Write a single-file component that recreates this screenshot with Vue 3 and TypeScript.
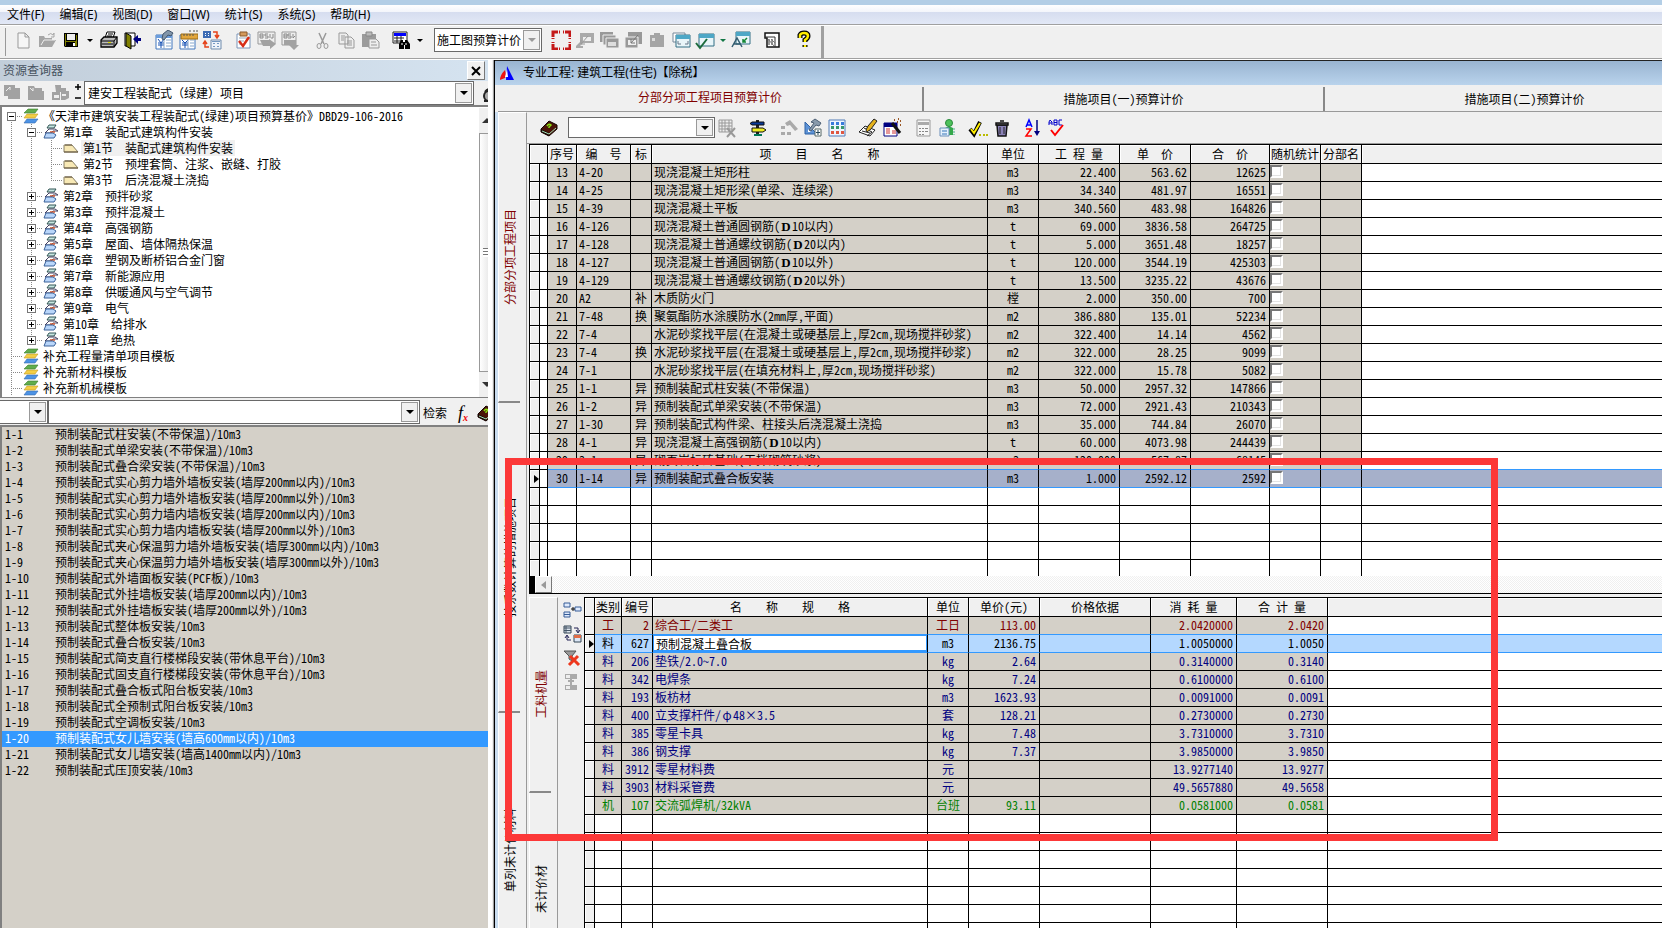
<script setup lang="ts">
import { ref } from 'vue'

interface Tool { icon: string; label: string; kind?: 'sep' | 'caret' }
interface TreeRow { guides: string[]; box?: '+' | '-'; icon: string; text: string; selected?: boolean }

const sep: Tool = { icon: '', label: '', kind: 'sep' }
const caret = (label: string): Tool => ({ icon: '', label, kind: 'caret' })
const tool = (icon: string, label: string): Tool => ({ icon, label })

const menus = ['文件(F)', '编辑(E)', '视图(D)', '窗口(W)', '统计(S)', '系统(S)', '帮助(H)']

const fileTools: Tool[] = [
  tool('new', '新建'), tool('open', '打开'), tool('save', '保存'), caret('保存选项'), tool('print', '打印'), tool('exit', '退出'), sep,
  tool('fee', '费用设置'), tool('rule', '单价标尺'), tool('swap', '转换'), sep,
  tool('check', '检查'), tool('bsi', '导出'), tool('bsw', '导入'), sep,
  tool('cut', '剪切'), tool('copy', '复制'), tool('paste', '粘贴'), sep,
  tool('find', '查找'), caret('查找选项'), sep,
]
const windowTools: Tool[] = [
  sep, tool('frame', '全屏'), tool('w1', '还原'), tool('w2', '层叠'), tool('w3', '平铺'), tool('w4', '粘贴窗口'), tool('w5', '新窗口'),
  tool('w6', '选中窗口'), caret('窗口选项'), tool('w7', '字体窗口'), sep, tool('page', '页面'), sep, tool('help', '帮助'),
]
const gridTools: Tool[] = [
  tool('griddel', '删除表格'), sep, tool('sign', '定位'), sep, tool('hammer', '修改'), tool('tools', '工具'), tool('calcgrid', '表格'), sep,
  tool('pen', '编辑'), tool('wizard', '向导'), sep, tool('calc', '计算'), tool('person', '人员'), sep,
  tool('tick', '确认'), tool('trash', '删除'), sep, tool('sort', '排序'), tool('abc', '校验'),
]
const detailTools = [tool('d1', '插入'), tool('d2', '替换'), tool('d3', '取消筛选'), tool('d4', '关联')]

const chapters = ['预拌砂浆', '预拌混凝土', '高强钢筋', '屋面、墙体隔热保温', '塑钢及断桥铝合金门窗', '新能源应用', '供暖通风与空气调节', '电气', '给排水', '绝热']
const sections = ['装配式建筑构件安装', '预埋套筒、注浆、嵌缝、打胶', '后浇混凝土浇捣']
const tree: TreeRow[] = [
  { guides: ['first'], box: '-', icon: 'layers', text: '《天津市建筑安装工程装配式(绿建)项目预算基价》DBD29-106-2016' },
  { guides: ['v', 't'], box: '-', icon: 'books', text: '第1章　装配式建筑构件安装' },
  ...sections.map((s, i) => ({ guides: ['v', 'v', i === 2 ? 'l' : 't'], icon: 'leaf', text: `第${i + 1}节　${s}`, selected: i === 0 })),
  ...chapters.map((c, i) => ({ guides: ['v', i === 9 ? 'l' : 't'], box: '+' as const, icon: 'books', text: `第${i + 2}章　${c}` })),
  ...['补充工程量清单项目模板', '补充新材料模板', '补充新机械模板'].map((s) => ({ guides: ['t'], icon: 'layers', text: s })),
]

const resources = [
  '柱安装(不带保温)', '单梁安装(不带保温)', '叠合梁安装(不带保温)', '实心剪力墙外墙板安装(墙厚200mm以内)',
  '实心剪力墙外墙板安装(墙厚200mm以外)', '实心剪力墙内墙板安装(墙厚200mm以内)', '实心剪力墙内墙板安装(墙厚200mm以外)',
  '夹心保温剪力墙外墙板安装(墙厚300mm以内)', '夹心保温剪力墙外墙板安装(墙厚300mm以外)', '外墙面板安装(PCF板)',
  '外挂墙板安装(墙厚200mm以内)', '外挂墙板安装(墙厚200mm以外)', '整体板安装', '叠合板安装', '简支直行楼梯段安装(带休息平台)',
  '固支直行楼梯段安装(带休息平台)', '叠合板式阳台板安装', '全预制式阳台板安装', '空调板安装', '女儿墙安装(墙高600mm以内)',
  '女儿墙安装(墙高1400mm以内)', '压顶安装',
].map((s, i) => ({ code: `1-${i + 1}`, name: `预制装配式${s}/10m3` }))
const selectedResource = ref('1-20')

const tabs = ['分部分项工程项目预算计价', '措施项目(一)预算计价', '措施项目(二)预算计价']

const itemHead = ['序号', '编　号', '标', '项　　目　　名　　称', '单位', '工 程 量', '单　价', '合　价', '随机统计', '分部名']
const items = [
  ['13', '4-20', '', '现浇混凝土矩形柱', 'm3', '22.400', '563.62', '12625'],
  ['14', '4-25', '', '现浇混凝土矩形梁(单梁、连续梁)', 'm3', '34.340', '481.97', '16551'],
  ['15', '4-39', '', '现浇混凝土平板', 'm3', '340.560', '483.98', '164826'],
  ['16', '4-126', '', '现浇混凝土普通圆钢筋(D10以内)', 't', '69.000', '3836.58', '264725'],
  ['17', '4-128', '', '现浇混凝土普通螺纹钢筋(D20以内)', 't', '5.000', '3651.48', '18257'],
  ['18', '4-127', '', '现浇混凝土普通圆钢筋(D10以外)', 't', '120.000', '3544.19', '425303'],
  ['19', '4-129', '', '现浇混凝土普通螺纹钢筋(D20以外)', 't', '13.500', '3235.22', '43676'],
  ['20', 'A2', '补', '木质防火门', '樘', '2.000', '350.00', '700'],
  ['21', '7-48', '换', '聚氨酯防水涂膜防水(2mm厚,平面)', 'm2', '386.880', '135.01', '52234'],
  ['22', '7-4', '', '水泥砂浆找平层(在混凝土或硬基层上,厚2cm,现场搅拌砂浆)', 'm2', '322.400', '14.14', '4562'],
  ['23', '7-4', '换', '水泥砂浆找平层(在混凝土或硬基层上,厚2cm,现场搅拌砂浆)', 'm2', '322.000', '28.25', '9099'],
  ['24', '7-1', '', '水泥砂浆找平层(在填充材料上,厚2cm,现场搅拌砂浆)', 'm2', '322.000', '15.78', '5082'],
  ['25', '1-1', '异', '预制装配式柱安装(不带保温)', 'm3', '50.000', '2957.32', '147866'],
  ['26', '1-2', '异', '预制装配式单梁安装(不带保温)', 'm3', '72.000', '2921.43', '210343'],
  ['27', '1-30', '异', '预制装配式构件梁、柱接头后浇混凝土浇捣', 'm3', '35.000', '744.84', '26070'],
  ['28', '4-1', '异', '现浇混凝土高强钢筋(D10以内)', 't', '60.000', '4073.98', '244439'],
  ['29', '3-1', '异', '砌页岩标砖基础(干拌砌筑砂浆)', 'm3', '120.000', '567.87', '68145'],
  ['30', '1-14', '异', '预制装配式叠合板安装', 'm3', '1.000', '2592.12', '2592'],
]
const itemAlign = ['c', 'code', 'c', 'name', 'c', 'r', 'r', 'r']
/* Splits off the diameter signs, which take a full-width cell. */
const parts = (s: string) => s.split(/(D(?=\d0)|φ)/)

const detailHead = ['类别', '编号', '名　　称　　规　　格', '单位', '单价(元)', '价格依据', '消 耗 量', '合 计 量']
const details = [
  ['工', '2', '综合工/二类工', '工日', '113.00', '', '2.0420000', '2.0420'],
  ['料', '627', '预制混凝土叠合板', 'm3', '2136.75', '', '1.0050000', '1.0050'],
  ['料', '206', '垫铁/2.0~7.0', 'kg', '2.64', '', '0.3140000', '0.3140'],
  ['料', '342', '电焊条', 'kg', '7.24', '', '0.6100000', '0.6100'],
  ['料', '193', '板枋材', 'm3', '1623.93', '', '0.0091000', '0.0091'],
  ['料', '400', '立支撑杆件/φ48×3.5', '套', '128.21', '', '0.2730000', '0.2730'],
  ['料', '385', '零星卡具', 'kg', '7.48', '', '3.7310000', '3.7310'],
  ['料', '386', '钢支撑', 'kg', '7.37', '', '3.9850000', '3.9850'],
  ['料', '3912', '零星材料费', '元', '', '', '13.9277140', '13.9277'],
  ['料', '3903', '材料采管费', '元', '', '', '49.5657880', '49.5658'],
  ['机', '107', '交流弧焊机/32kVA', '台班', '93.11', '', '0.0581000', '0.0581'],
]
const detailAlign = ['c', 'r', 'name', 'c', 'r', 'r', 'r', 'r']
const tone: Record<string, string> = { 工: 'labor', 料: 'material', 机: 'machine' }
const editName = ref('预制混凝土叠合板')
const priceMode = ref('施工图预算计价')
const library = ref('建安工程装配式（绿建）项目')
</script>

<template>
  <svg class="defs" aria-hidden="true">
    <symbol id="new" viewBox="0 0 20 20"><path d="M5 3h7l4 4v11H5zM12 3v4h4" fill="#f6f6f6" stroke="#999" /></symbol>
    <symbol id="open" viewBox="0 0 20 20"><path d="M2 16V6h5l1 2h7v2h4l-4 7H2z" fill="#a5a5a5" /><path d="M4 15l3-5h11" stroke="#eee" fill="none" /><path d="M11 5q3-3 5 0l1-2v4h-3" stroke="#a5a5a5" fill="none" /></symbol>
    <symbol id="save" viewBox="0 0 20 20"><path d="M3 3h14v14H4l-1-1z" fill="#000" /><path d="M6 4h8v6H6z" fill="#eee" /><path d="M4 4h1v7h10V5h1v11h-2v-4H5v4H4z" fill="#808000" /><path d="M12 13h2v3h-2z" fill="#fff" /></symbol>
    <symbol id="print" viewBox="0 0 20 20"><path d="M6 8l2-6h8l-2 6z" fill="#fff" stroke="#000" /><path d="M9 4h5M8 6h5" stroke="#000" /><path d="M2 10l3-3h13v6l-3 4H2z" fill="#bbb" stroke="#000" stroke-width="1.3" /><path d="M2 11h13v5M15 11l3-4M3 14h11" stroke="#000" fill="none" /><path d="M9 12h3v1H9z" fill="#dd0" /></symbol>
    <symbol id="exit" viewBox="0 0 20 20"><path d="M2 3h10v13H2z" fill="#fff" stroke="#000" /><path d="M3 3l5 3v13l-5-3z" fill="#808000" stroke="#000" /><path d="M10 9l5-4v3h3v3h-3v3z" fill="#000080" /></symbol>
    <symbol id="fee" viewBox="0 0 20 20"><path d="M2 5h16v14H2z" fill="#fff" stroke="#4176bd" /><path d="M2 5h16v3H2z" fill="#6c9edd" /><path d="M4 9l3 4 3-4M4 13h6M4 15h6M7 13v5" stroke="#1450b4" fill="none" /><path d="M12 10h5M12 13h5M12 16h5M10 8v11" stroke="#88a8cc" /><path d="M9 4l5-4 5 3-2 3-3-1-4 5-2-1z" fill="#8295a9" stroke="#43566c" /></symbol>
    <symbol id="rule" viewBox="0 0 20 20"><path d="M2 5h15v14H2z" fill="#fff" stroke="#4176bd" /><path d="M4 10l3 3 3-3M4 13h6M4 15h6M7 13v5" stroke="#1450b4" fill="none" /><path d="M12 10h4M12 13h4M12 16h4M10 8v11" stroke="#88a8cc" /><path d="M3 4h17v5H3z" fill="#e2a63c" stroke="#9c6c16" /><path d="M6 4v2M9 4v2M12 4v2M15 4v2M11 1h2M15 1h2M18 1h2" stroke="#555" /></symbol>
    <symbol id="swap" viewBox="0 0 20 20"><path d="M1 1h8v7H1z" fill="#3d6cb4" /><path d="M3 3h1v1H3zM6 3h1v1H6zM3 5h1v1H3zM6 5h1v1H6z" fill="#fff" /><path d="M9 10h10v9H9z" fill="#eef3fa" stroke="#718cad" /><path d="M10 11h8v1h-8zM11 13h2v1h-2zM15 13h2v1h-2zM11 16h2v1h-2zM15 16h2v1h-2z" fill="#7598c2" /><path d="M11 2h4v5M13 5l2 3 2-3M7 17H3v-5M1 14l2-3 2 3" stroke="#e5431b" stroke-width="1.5" fill="none" /></symbol>
    <symbol id="check" viewBox="0 0 20 20"><path d="M4 4h13v14H4z" fill="#fff" stroke="#7d95b8" /><path d="M7 2h7v4H7z" fill="#d49a5c" stroke="#8a5a2c" /><path d="M6 8h8M6 11h5M6 14h3" stroke="#9ab" /><path d="M6 11l4 5 6-9" fill="none" stroke="#d72d16" stroke-width="2.5" /></symbol>
    <symbol id="bsi" viewBox="0 0 20 20"><path d="M1 2h17v12H1z" fill="#eee" stroke="#999" /><path d="M3 4h3v4H3zM3 6h3M11 4H8v2h3v2H8M13 4v4M16 4v4h-2" fill="none" stroke="#888" /><path d="M3 10h9V9l7 5-6 5v-3H6z" fill="#a2a2a2" /></symbol>
    <symbol id="bsw" viewBox="0 0 20 20"><path d="M1 2h14v13H1z" fill="#eee" stroke="#999" /><path d="M3 4h3v4H3zM3 6h3M10 4H7v2h3v2H7M12 4v4l2-2" fill="none" stroke="#888" /><path d="M3 10h12v5h3l-5 5-5-5h-5z" fill="#a2a2a2" /></symbol>
    <symbol id="cut" viewBox="0 0 20 20"><path d="M7 3l5 11M14 3L9 14" stroke="#999" stroke-width="1.5" /><ellipse cx="7" cy="16" rx="2" ry="2.5" fill="none" stroke="#999" /><ellipse cx="14" cy="16" rx="2" ry="2.5" fill="none" stroke="#999" /></symbol>
    <symbol id="copy" viewBox="0 0 20 20"><path d="M3 3h7l2 2v9H3zM9 7h6l3 3v8H9z" fill="#eee" stroke="#999" /><path d="M5 6h4M5 8h3M5 10h3M11 11h5M11 13h5M11 15h5" stroke="#999" /></symbol>
    <symbol id="paste" viewBox="0 0 20 20"><path d="M2 4h14v13H2z" fill="#9b9b9b" /><path d="M6 2h6v4H6z" fill="#bbb" stroke="#888" /><path d="M9 9h7l3 3v6H9z" fill="#eee" stroke="#999" /><path d="M11 12h5M11 15h6" stroke="#999" /></symbol>
    <symbol id="find" viewBox="0 0 20 20"><path d="M2 2h14v11H2z" fill="#fff" stroke="#222" /><path d="M3 3h12v3H3z" fill="#00f" /><path d="M3 8h10M3 11h7M6 6v7M10 6v6" stroke="#222" /><path d="M8 19v-5l2-4h2v2h2v-2h2l3 4v5h-5v-4h-1v4z" fill="#000" /><path d="M11 13v2M15 13v2" stroke="#fff" /></symbol>
    <symbol id="frame" viewBox="0 0 20 20"><path d="M2 7V2h5M8 2h1M12 2h1M14 2h5v5M2 8v1M2 12v1M19 8v1M19 12v1M19 14v5h-5M7 19H2v-5M8 19h1M12 19h1" fill="none" stroke="#c41818" stroke-width="3" /></symbol>
    <symbol id="w1" viewBox="0 0 20 20"><path d="M5 3h14v10H8l-3 3h3v2H1v-2l4-4z" fill="#aaa" /><path d="M8 7h8v4H8z" fill="#eee" /><path d="M13 6l-7 8M6 10v4h4" stroke="#999" fill="none" /></symbol>
    <symbol id="w2" viewBox="0 0 20 20"><path d="M1 2h13v10H1z" fill="#999" /><path d="M4 5h13v10H4z" fill="#999" stroke="#eee" /><path d="M7 8h13v10H7z" fill="#999" stroke="#eee" /><path d="M9 12h8v4H9z" fill="#ddd" /></symbol>
    <symbol id="w3" viewBox="0 0 20 20"><path d="M5 2h14v12H5z" fill="#999" /><path d="M2 7h13v11H2z" fill="#999" stroke="#eee" /><path d="M5 10h8v5H5z" fill="#eee" /><path d="M15 5l-7 8M8 9v4h4" stroke="#777" fill="none" /></symbol>
    <symbol id="w4" viewBox="0 0 20 20"><path d="M3 5h4V3h6v2h4v12H3z" fill="#a5a5a5" /><path d="M5 8h3v3H5z" fill="#ddd" /></symbol>
    <symbol id="w5" viewBox="0 0 20 20"><path d="M2 3h12v9H2z" fill="#fff" stroke="#789" /><path d="M5 5h14v12H5z" fill="#e9f5f9" stroke="#326e84" /><path d="M5 5h14v4H5z" fill="#4ea7c6" /><path d="M14 14h3v-3M7 11v3h3" stroke="#678" fill="none" /></symbol>
    <symbol id="w6" viewBox="0 0 20 20"><path d="M4 4h15v12H4z" fill="#e9f5f9" stroke="#326e84" /><path d="M4 4h15v4H4z" fill="#4ea7c6" /><path d="M1 13l4 5 7-9" fill="none" stroke="#1c6b3d" stroke-width="2" /></symbol>
    <symbol id="w7" viewBox="0 0 20 20"><path d="M5 2h14v12H5z" fill="#e9f5f9" stroke="#326e84" /><path d="M5 2h14v4H5z" fill="#4ea7c6" /><path d="M1 17L6 8l5 9M3 14h6" fill="none" stroke="#345d70" stroke-width="1.5" /><path d="M16 8l-4 4M12 9v3h3" fill="none" stroke="#138735" stroke-width="1.5" /></symbol>
    <symbol id="page" viewBox="0 0 20 20"><path d="M3 3h14v14H5V8H3z" fill="#fff" stroke="#111" stroke-width="1.500" /><path d="M3 7h10v10M7 9v6M10 15V9" fill="none" stroke="#333" /><path d="M6 9l6 7M9 9l4 4" stroke="#777" /></symbol>
    <symbol id="help" viewBox="0 0 20 20"><path d="M7 8V5q1-2 4-2 4 0 4 3 0 2-3 4v2M12 15v2" fill="none" stroke="#000" stroke-width="5" /><path d="M7 8V5q1-2 4-2 4 0 4 3 0 2-3 4v2M12 15v2" fill="none" stroke="#fe0" stroke-width="2.5" /></symbol>
    <symbol id="griddel" viewBox="0 0 20 20"><path d="M2 2h13v12H2z" fill="#eee" stroke="#999" /><path d="M2 5h13M2 8h13M2 11h13M5 2v12M8 2v12M12 2v12" stroke="#999" /><path d="M10 10l8 9M18 10l-8 9" stroke="#999" stroke-width="2" /></symbol>
    <symbol id="sign" viewBox="0 0 20 20"><path d="M8 2h3v16H8z" fill="#222" /><path d="M4 4h12v3H4L2 5.500z" fill="#0a3a9a" stroke="#111" /><path d="M4 10h11l3 2-3 2H4z" fill="#ee2" stroke="#111" /><path d="M6 17h8" stroke="#075" stroke-width="2" /></symbol>
    <symbol id="hammer" viewBox="0 0 20 20"><path d="M6 5l5-3 8 9-3 2-5-6-3 1z" fill="#aaa" /><path d="M2 8h4v3H2zM2 14h4v3H2zM8 14h4v3H8z" fill="#aaa" /></symbol>
    <symbol id="tools" viewBox="0 0 20 20"><path d="M2 4v12h12z" fill="#5d92d5" stroke="#2f62a5" /><path d="M5 11v3h3z" fill="#fff" /><path d="M8 4l4-3 6 4-2 3-3-1-5 6-2-1 5-7z" fill="#899aab" stroke="#4e6075" /><path d="M12 11h6v7h-6z" fill="#fff" stroke="#566" /><path d="M15 12v5M13 14.5h4" stroke="#245" /></symbol>
    <symbol id="calcgrid" viewBox="0 0 20 20"><path d="M2 2h16v16H2z" fill="#eef5ff" stroke="#527db7" /><path d="M4 4h3v3H4zM9 4h3v3H9zM14 4h3v3h-3z" fill="#387bdc" /><path d="M4 8h3v3H4zM9 8h3v3H9zM14 8h3v3h-3z" fill="#39976d" /><path d="M4 13h3v3H4zM9 13h3v3H9zM14 13h3v3h-3z" fill="#e05740" /></symbol>
    <symbol id="pen" viewBox="0 0 20 20"><path d="M1 14l6-6 10 4-5 6z" fill="#fff" stroke="#222" /><path d="M4 13l8 2M6 10l8 4M9 18l5-4" stroke="#222" /><path d="M8 12l2-4 6-7 3 2-6 8-4 3z" fill="#e5b21b" stroke="#222" /></symbol>
    <symbol id="wizard" viewBox="0 0 20 20"><path d="M2 5h13v13H2z" fill="#fff" stroke="#000080" /><path d="M2 5h13v4H2z" fill="#000080" /><path d="M4 11h4M4 13h4M4 15h4M10 13h4M10 15h4" stroke="#c33" /><path d="M10 5l8 10" stroke="#111" stroke-width="3" /><path d="M12 2h1M16 1h1M15 4h1M18 3h1M18 7h1" stroke="#952" stroke-width="2" /></symbol>
    <symbol id="calc" viewBox="0 0 20 20"><path d="M4 2h13v16H4z" fill="#f6f6f6" stroke="#999" /><path d="M5 4h11v3H5z" fill="#aaa" /><path d="M6 10h2v1H6zM9 10h2v1H9zM12 10h3v1h-3zM6 13h2v1H6zM9 13h2v1H9zM12 13h3v1h-3zM6 16h2v1H6zM9 16h2v1H9z" fill="#888" /></symbol>
    <symbol id="person" viewBox="0 0 20 20"><path d="M8 10q4-3 8 0v7H8z" fill="#35a84b" /><circle cx="12" cy="5" r="3.5" fill="#4ec15b" stroke="#298a3c" /><path d="M3 10h9v8H3z" fill="#e4f0fc" stroke="#6a8fba" /><path d="M5 13h5M5 16h5" stroke="#3677b9" /><path d="M17 10v7" stroke="#4a8" stroke-dasharray="2 1" /></symbol>
    <symbol id="tick" viewBox="0 0 20 20"><path d="M2 11l4 5L12 4" fill="none" stroke="#000" stroke-width="4" /><path d="M3 11l3 4 6-10" fill="none" stroke="#fe0" stroke-width="2" /><path d="M11 17h2M15 17h2M18 17h2" stroke="#bb0" stroke-width="2" /></symbol>
    <symbol id="trash" viewBox="0 0 20 20"><path d="M5 7h10l-1 11H6z" fill="#8b82b8" stroke="#111" stroke-width="1.5" /><path d="M4 5h12v2H4zM8 3h4" stroke="#111" stroke-width="1.5" fill="#888" /><path d="M8 9v7M12 9v7" stroke="#222" /></symbol>
    <symbol id="sort" viewBox="0 0 20 20"><path d="M3 9l3-7 3 7M4 7h4" stroke="#00f" stroke-width="1.5" fill="none" /><path d="M3 11h5l-5 7h6" stroke="#f00" stroke-width="1.5" fill="none" /><path d="M14 2v12" stroke="#000080" stroke-width="1.5" /><path d="M11 13h6l-3 5z" fill="#000080" /></symbol>
    <symbol id="abc" viewBox="0 0 20 20"><path d="M2 7V4l1-2 2 2v3M2 5h3M7 2v5h3V2zM7 4.500h3M15 2h-3v5h3" stroke="#00c" fill="none" /><path d="M4 12l4 5 8-10" stroke="#f00" fill="none" stroke-width="2" /></symbol>
    <symbol id="book" viewBox="0 0 20 20"><path d="M2 11L10 3l8 4v4l-8 7-8-4z" fill="#4a1408" stroke="#150500" /><path d="M2 11l8 4v3l-8-4z" fill="#1a0602" /><path d="M3 13l7 3 7-6" stroke="#a4e0b8" fill="none" /><path d="M8 8q2-3 4-1l-2 2v1" stroke="#8d1" fill="none" stroke-width="1.500" /></symbol>
    <symbol id="folder1" viewBox="0 0 20 20"><path d="M2 2h11v3h5v11H6v-3H2z" fill="#a2a2a2" /><path d="M4 8l4-4v3" stroke="#eee" fill="none" /></symbol>
    <symbol id="folder2" viewBox="0 0 20 20"><path d="M2 3h6l1 2h7v3h2v9H2z" fill="#a2a2a2" /><path d="M4 5l3 3v-3" stroke="#eee" fill="none" /></symbol>
    <symbol id="folder3" viewBox="0 0 20 20"><path d="M5 2h6v3h5v4H6zM2 9h8v8H2zM11 8h8v7l-4 2h-4z" fill="#a2a2a2" /><path d="M4 12h5v3H4zM12 11h4v2h-4z" fill="#eee" /></symbol>
    <symbol id="layers" viewBox="0 0 16 16"><path d="M1 15l3-4h11l-3 4z" fill="#4d93e5" stroke="#376cb0" stroke-width=".6" /><path d="M1 10l3-4h11l-3 4z" fill="#f3ce46" stroke="#c59b22" stroke-width=".6" /><path d="M1 5l4-4h10l-3 4z" fill="#61ad4c" stroke="#3b7e2f" stroke-width=".6" /></symbol>
    <symbol id="books" viewBox="0 0 16 16"><path d="M4 4l2-3h7l-2 3z" fill="#c7e6e2" stroke="#355" /><path d="M2 9l4-4h6l3 2H10L8 9z" fill="#fff" stroke="#454060" /><path d="M7 8h5" stroke="#d5572d" stroke-width="1.5" /><path d="M1 14l2-5h7l3 2-2 3z" fill="#b9d6fa" stroke="#3b629a" /></symbol>
    <symbol id="leaf" viewBox="0 0 16 16"><path d="M1 12V5h8l6 7z" fill="#f8e9b5" stroke="#888066" /><path d="M2 5h7M1 12h14" stroke="#64543a" /></symbol>
    <symbol id="d1" viewBox="0 0 20 20"><path d="M2 3h6v4H2zM2 12h6v5H2zM13 7h6v4h-6z" fill="#dfeafc" stroke="#365c97" /><path d="M2 14.500h6" stroke="#365c97" /><path d="M9 9h4M11 7v4" stroke="#111" /></symbol>
    <symbol id="d2" viewBox="0 0 20 20"><path d="M2 2h7v7H2z" fill="#dde5ee" stroke="#345" /><path d="M2 4h7M2 6.500h7M4 2v7" stroke="#456" /><path d="M12 11h7v7h-7z" fill="#dce7f6" stroke="#345" /><path d="M12 11h7v3h-7z" fill="#e16c47" /><path d="M12 4h4v4M14 6l2 3 2-3M9 16H5v-4M3 14l2-3 2 3" stroke="#225" fill="none" /></symbol>
    <symbol id="d3" viewBox="0 0 20 20"><path d="M2 3h12l-4 5v5l-3-2V8z" fill="#999" stroke="#555" /><path d="M8 8l9 9M16 8l-9 9" stroke="#ed371c" stroke-width="3" /></symbol>
    <symbol id="d4" viewBox="0 0 20 20"><path d="M3 2h12v5H3zM3 13h12v5H3z" fill="#aaa" /><path d="M9 7v6M6 9h6" stroke="#aaa" stroke-width="2" /><path d="M4 3h4v3H4zM4 14h4v3H4z" fill="#eee" /></symbol>
    <symbol id="logo" viewBox="0 0 16 16"><path d="M8 1l7 14H7z" fill="#00f" /><path d="M6 5l1 5-1 3-5 2q0-5 5-10z" fill="#e11" /><path d="M8 4l1 8H6z" fill="#fff" /></symbol>
  </svg>

  <div class="app">
    <div class="sky"></div>
    <nav class="menubar" aria-label="主菜单"><button v-for="m in menus" :key="m">{{ m }}</button></nav>

    <header class="toolbar">
      <span class="grip"></span>
      <template v-for="(t, i) in fileTools" :key="i">
        <span v-if="t.kind === 'sep'" class="sep"></span>
        <button v-else-if="t.kind === 'caret'" class="caret" :aria-label="t.label"></button>
        <button v-else class="tool" :aria-label="t.label"><svg><use :href="'#' + t.icon" /></svg></button>
      </template>
      <label class="combo mode"><select v-model="priceMode" aria-label="计价方式"><option>施工图预算计价</option></select><span class="drop dim"></span></label>
      <template v-for="(t, i) in windowTools" :key="i">
        <span v-if="t.kind === 'sep'" class="sep"></span>
        <button v-else-if="t.kind === 'caret'" class="caret teal" :aria-label="t.label"></button>
        <button v-else class="tool" :aria-label="t.label"><svg><use :href="'#' + t.icon" /></svg></button>
      </template>
      <span class="bar-end"></span>
    </header>

    <div class="work">
      <aside class="side">
        <div class="side-title"><h2>资源查询器</h2><button class="close" aria-label="关闭"><svg viewBox="0 0 10 10"><path d="M1 1l8 8M9 1L1 9" stroke="#000" stroke-width="2" /></svg></button></div>
        <div class="library">
          <button v-for="n in 3" :key="n" class="tool" :aria-label="'目录' + n"><svg><use :href="'#folder' + n" /></svg></button>
          <button class="zoomer" aria-label="展开或折叠"><svg viewBox="0 0 8 18"><path d="M1 4h6M4 1v6M1 15h6" stroke="#000" stroke-width="1.500" /></svg></button>
          <label class="combo grow"><select v-model="library" aria-label="定额库"><option>建安工程装配式（绿建）项目</option></select><span class="drop"></span></label>
          <button class="cut-tool" aria-label="查看"><svg viewBox="0 0 20 20"><circle cx="9" cy="12" r="5" fill="#aaa" stroke="#222" stroke-width="2" /><path d="M5 8q5-6 9 0M4 17h11" stroke="#222" stroke-width="2" fill="none" /></svg></button>
        </div>
        <div class="tree">
          <ul>
            <li v-for="(r, i) in tree" :key="i">
              <span v-for="(g, k) in r.guides" :key="k" class="guide" :class="g"><button v-if="r.box && k === r.guides.length - 1" class="box" :class="{ plus: r.box === '+' }" :aria-label="r.box === '+' ? '展开' : '折叠'"></button></span>
              <svg class="node"><use :href="'#' + r.icon" /></svg>
              <span class="node-text" :class="{ on: r.selected }">{{ r.text }}</span>
            </li>
          </ul>
          <div class="vbar"><i class="up"></i><b></b><i class="down"></i></div>
        </div>
        <div class="search">
          <label class="combo kind"><select aria-label="检索类别"><option></option></select><span class="drop"></span></label>
          <label class="combo grow"><input type="text" aria-label="检索内容" /><span class="drop"></span></label>
          <button class="go">检索</button>
          <button class="fx" aria-label="公式"><em>f</em><sub>x</sub></button>
          <button class="book-cut" aria-label="定额册"><svg><use href="#book" /></svg></button>
        </div>
        <ul class="list">
          <li v-for="r in resources" :key="r.code" :class="{ on: r.code === selectedResource }" @click="selectedResource = r.code"><span>{{ r.code }}</span>{{ r.name }}</li>
        </ul>
      </aside>

      <div class="splitter"></div>

      <main class="doc">
        <div class="doc-title"><svg><use href="#logo" /></svg><h1>专业工程: 建筑工程(住宅)【除税】</h1></div>
        <div class="tabs" role="tablist">
          <button v-for="(t, i) in tabs" :key="t" role="tab" :aria-selected="i === 0" :class="{ on: i === 0 }">{{ t }}</button>
        </div>
        <div class="doc-body">
          <div class="vtabs outer" role="tablist">
            <button class="on" role="tab"><span>分部分项工程项目</span></button>
            <button role="tab"><span>按系数计算的措施项目</span></button>
            <button role="tab"><span>单列未计价材料</span></button>
          </div>
          <div class="content">
            <div class="gridbar">
              <button class="tool" aria-label="定额册"><svg><use href="#book" /></svg></button>
              <span class="sep"></span>
              <label class="combo locate"><select aria-label="定位"><option></option></select><span class="drop"></span></label>
              <template v-for="(t, i) in gridTools" :key="i">
                <span v-if="t.kind === 'sep'" class="sep"></span>
                <button v-else class="tool" :aria-label="t.label"><svg><use :href="'#' + t.icon" /></svg></button>
              </template>
            </div>

            <table class="grid items">
              <colgroup><col class="w10" /><col class="w8" /><col class="w29" /><col class="w54" /><col class="w21" /><col class="w336" /><col class="w51" /><col class="w81" /><col class="w71" /><col class="w79" /><col class="w51" /><col class="w41" /><col /></colgroup>
              <thead><tr><th colspan="2"></th><th v-for="h in itemHead" :key="h">{{ h }}</th><th class="rest"></th></tr></thead>
              <tbody>
                <tr v-for="(r, i) in items" :key="r[0]" :class="{ before: i === 16, current: i === 17 }">
                  <td class="mark"><i v-if="i === 17"></i></td><td class="gap"></td>
                  <td v-for="(c, k) in r" :key="k" :class="itemAlign[k]"><template v-if="k === 3"><template v-for="(p, n) in parts(c)" :key="n"><b v-if="p === 'D'">D</b><template v-else>{{ p }}</template></template></template><template v-else>{{ c }}</template></td>
                  <td class="tickcell"><input type="checkbox" :aria-label="'随机统计 ' + r[0]" /></td><td></td><td class="rest"></td>
                </tr>
                <tr v-for="n in 5" :key="'b' + n" class="blank" :class="{ last: n === 5 }"><td class="mark"></td><td v-for="k in 11" :key="k"></td><td class="rest"></td></tr>
              </tbody>
            </table>
            <div class="hbar"><i></i><button aria-label="向左滚动"></button><span></span></div>

            <div class="detail">
              <div class="vtabs inner" role="tablist">
                <button class="on" role="tab"><span>工料机量</span></button>
                <button role="tab"><span>未计价材</span></button>
              </div>
              <div class="detail-tools">
                <button v-for="t in detailTools" :key="t.icon" class="tool" :aria-label="t.label"><svg><use :href="'#' + t.icon" /></svg></button>
              </div>
              <table class="grid details">
                <colgroup><col class="w10" /><col class="w27" /><col class="w31" /><col class="w275" /><col class="w41" /><col class="w71" /><col class="w111" /><col class="w86" /><col class="w91" /><col /></colgroup>
                <thead><tr><th></th><th v-for="h in detailHead" :key="h">{{ h }}</th><th class="rest"></th></tr></thead>
                <tbody>
                  <tr v-for="(r, i) in details" :key="r[1]" :class="[tone[r[0]], { before: i === 0, editing: i === 1 }]">
                    <td class="mark"><i v-if="i === 1"></i></td>
                    <td v-for="(c, k) in r" :key="k" :class="[detailAlign[k], { edit: i === 1 && k === 2 }]"><input v-if="i === 1 && k === 2" v-model="editName" type="text" aria-label="名称规格" /><template v-else-if="k === 2"><template v-for="(p, n) in parts(c)" :key="n"><span v-if="p === 'φ'" class="wide">φ</span><template v-else>{{ p }}</template></template></template><template v-else>{{ c }}</template></td>
                    <td class="rest"></td>
                  </tr>
                  <tr v-for="n in 7" :key="'b' + n" class="blank"><td class="mark"></td><td v-for="k in 8" :key="k"></td><td class="rest"></td></tr>
                </tbody>
              </table>
            </div>
          </div>
        </div>
      </main>
    </div>
    <div class="callout"></div>
  </div>
</template>

<style>
html, body { margin: 0; background: #f0f0f0; }
</style>

<style scoped>
.defs { position: absolute; width: 0; height: 0; }
.app { position: relative; display: flex; flex-direction: column; height: 100vh; overflow: hidden; background: #f0f0f0; color: #000; font: 12px/16px "Noto Sans Mono CJK SC", "Noto Sans CJK SC", monospace; }
button, input, select { font: inherit; color: inherit; margin: 0; padding: 0; border: 0; background: none; border-radius: 0; outline: 0; appearance: none; }
h1, h2 { margin: 0; font: 12px/20px "Noto Sans", "Noto Sans CJK SC", sans-serif; }
ul { margin: 0; padding: 0; list-style: none; }
.sky { flex: none; height: 5px; background: #b3cee6; }
.menubar { flex: none; display: flex; gap: 15px; height: 19px; padding-left: 7px; background: linear-gradient(#fff, #f3f5fb 36%, #d6ddef 38%, #e2e8f6); border-bottom: 1px solid #a0a0a0; font: 12px/19px "Noto Sans", "Noto Sans CJK SC", sans-serif; }
.toolbar { flex: none; display: flex; align-items: center; height: 32px; border-top: 1px solid #fff; border-bottom: 1px solid #a0a0a0; }
.toolbar .tool, .toolbar .caret, .mode { margin-bottom: 4px; }
.grip { width: 2px; height: 28px; margin: 0 5px 0 3px; border-right: 1px solid #999; }
.tool { flex: none; width: 24px; height: 24px; display: flex; align-items: center; justify-content: center; }
.tool svg { width: 20px; height: 20px; }
.sep { flex: none; width: 7px; }
.caret { flex: none; width: 14px; height: 20px; display: flex; align-items: center; justify-content: center; }
.teal { width: 12px; }
.caret::before { content: ""; border: 3px solid transparent; border-top-color: #000; border-bottom: 0; }
.teal::before { border-top-color: #174; }
.bar-end { align-self: stretch; width: 6px; border-right: 1px solid #a0a0a0; box-shadow: 2px 0 #a0a0a0; }
.combo { box-sizing: border-box; display: flex; height: 24px; background: #fff; border: 1px solid #696969; padding: 1px; min-width: 0; }
.combo select, .combo input { flex: 1; min-width: 0; padding-left: 2px; background: #fff; }
.combo.mode select { padding-left: 1px; }
.drop { flex: none; box-sizing: border-box; width: 17px; background: #f0f0f0; border: 1px solid #999; display: flex; align-items: center; justify-content: center; }
.drop::before { content: ""; border: 4px solid transparent; border-top-color: #000; border-bottom: 0; }
.drop.dim::before { border-top-color: #999; }
.mode { width: 108px; }
.work { flex: 1; min-height: 0; display: flex; border-top: 1px solid #fff; }
.side { flex: none; width: 488px; display: flex; flex-direction: column; overflow: hidden; }
.side-title { flex: none; display: flex; align-items: center; justify-content: space-between; height: 21px; padding: 0 3px; background: linear-gradient(90deg, #c2ceda, #d5e3f0); color: #47525f; }
.close { box-sizing: border-box; width: 18px; height: 19px; background: #f0f0f0; border: 1px solid #fff; border-right-color: #777; border-bottom-color: #777; display: flex; align-items: center; justify-content: center; }
.close svg { width: 10px; height: 10px; }
.library { flex: none; display: flex; height: 24px; }
.zoomer { width: 12px; }
.zoomer svg { width: 8px; height: 18px; }
.grow { flex: 1; }
.cut-tool { flex: none; width: 14px; height: 24px; overflow: hidden; }
.cut-tool svg { display: block; width: 20px; height: 20px; margin: 2px 0 0 6px; }
.tree { flex: none; display: flex; height: 289px; margin-bottom: 2px; padding-top: 1px; border: solid #808080; border-width: 2px 0 1px 2px; background: #fff; }
.tree ul { flex: 1; overflow: hidden; }
.tree li { display: flex; height: 16px; white-space: pre; }
.guide { flex: none; width: 20px; height: 16px; display: flex; align-items: center; justify-content: center; background-repeat: no-repeat;
  --v: repeating-linear-gradient(#888 0 1px, transparent 1px 2px); --h: repeating-linear-gradient(90deg, #888 0 1px, transparent 1px 2px); }
.guide.v { background-image: var(--v); background-size: 1px 100%; background-position: 9px 0; }
.guide.t, .guide.l { background-image: var(--v), var(--h); background-size: 1px 16px, 11px 1px; background-position: 9px 0, 9px 8px; }
.guide.l { background-size: 1px 8px, 11px 1px; }
.guide.first { background-image: var(--v), var(--h); background-size: 1px 8px, 11px 1px; background-position: 9px 8px; }
.box { width: 9px; height: 9px; border: 1px solid #777; box-sizing: border-box; margin-right: 1px; background: linear-gradient(#000, #000) center / 5px 1px no-repeat #fff; }
.box.plus { background: linear-gradient(#000, #000) center / 5px 1px no-repeat, linear-gradient(#000, #000) center / 1px 5px no-repeat #fff; }
.node { flex: none; width: 16px; height: 16px; margin: 0 2px 0 1px; }
.node-text { padding: 0 2px; }
.node-text.on { background: #f0f0f0; }
.vbar { flex: none; width: 9px; display: flex; flex-direction: column; overflow: hidden; background: #f0f0f0; }
.vbar b { box-sizing: border-box; width: 16px; height: 239px; border: 1px solid #999; background: repeating-linear-gradient(#777 0 1px, #fff 1px 3px) 3px center / 8px 9px no-repeat, linear-gradient(90deg, #fff, #dcdcdc); }
.vbar i { flex: 1; display: flex; align-items: center; padding-left: 3px; }
.vbar i::before { content: ""; border: 5px solid transparent; }
.vbar .up::before { border-bottom-color: #333; border-top: 0; }
.vbar .down::before { border-top-color: #333; border-bottom: 0; }
.search { flex: none; display: flex; height: 25px; }
.kind { width: 48px; border-left: 0; }
.go { width: 30px; }
.fx { width: 26px; text-align: center; white-space: nowrap; }
.fx em { font: italic 18px/20px "Liberation Serif", serif; }
.fx sub { font: italic bold 10px/10px "Liberation Serif", serif; color: #e00; vertical-align: -2px; }
.book-cut { flex: none; width: 12px; overflow: hidden; }
.book-cut svg { display: block; width: 20px; height: 20px; }
.list { flex: 1; border: solid #808080; border-width: 2px 0 0 2px; background: #d4d0c8; overflow: hidden; line-height: 14px; }
.list li { height: 16px; padding-left: 3px; white-space: pre; cursor: default; }
.list li span { display: inline-block; width: 50px; }
.list .on { background: #3399ff; color: #fff; }
.splitter { flex: none; box-sizing: border-box; width: 7px; border: solid #fff; border-width: 0 0 0 4px; box-shadow: inset -1px 0 #000, inset -2px 0 #a0a0a0; }
.doc { flex: 1; min-width: 0; display: flex; flex-direction: column; border-top: 1px solid #222; }
.doc-title { flex: none; display: flex; align-items: center; gap: 8px; height: 24px; padding-left: 4px; background: linear-gradient(#99b4d1, #b9d3ec); }
.doc-title svg { width: 16px; height: 16px; }
.tabs { flex: none; display: flex; height: 26px; margin-left: 3px; overflow: hidden; border-bottom: 1px solid #999; }
.tabs button { flex: none; box-sizing: border-box; width: 401px; height: 24px; margin-top: 2px; border-right: 2px solid #888; }
.tabs button.on { width: 426px; padding-bottom: 4px; color: #800000; }
.doc-body { flex: 1; min-height: 0; display: flex; border-left: 3px solid #c9dcef; }
.vtabs { flex: none; display: flex; flex-direction: column; box-sizing: border-box; border-right: 1px solid #999; border-top: 1px solid #fff; }
.vtabs button { flex: none; display: flex; align-items: center; justify-content: center; border-bottom: 2px solid #888; border-left: 1px solid #fff; }
.vtabs span { writing-mode: vertical-rl; text-orientation: sideways; transform: rotate(180deg); line-height: 16px; }
.vtabs .on { color: #800000; }
.outer { width: 29px; padding-right: 6px; }
.outer button { height: 310px; }
.outer button:first-child { height: 290px; }
.outer button:last-child { height: 274px; border-bottom: 0; }
.inner { width: 29px; padding-right: 6px; }
.inner button { height: 195px; }
.content { flex: 1; min-width: 0; display: flex; flex-direction: column; }
.gridbar { flex: none; display: flex; align-items: center; height: 31px; padding-left: 10px; border-bottom: 1px solid #999; }
.locate { width: 147px; height: 21px; }
.grid { table-layout: fixed; border-collapse: separate; border-spacing: 0; border: solid #000; border-width: 1px 0 0 1px; }
.items { flex: none; width: calc(100% - 2px); margin: 0 0 0 2px; }
.grid th, .grid td { box-sizing: border-box; height: 18px; padding: 0; border: solid #000; border-width: 0 1px 1px 0; font-weight: 400; line-height: 16px; white-space: pre; overflow: hidden; text-align: center; }
.grid th { height: 19px; background: #f0f0f0; box-shadow: inset 1px 1px #fff; }
.grid td { background: #d4d0c8; line-height: 15px; vertical-align: top; }
.grid .rest { border-right: 0; }
.grid td.rest, .grid .blank td, .grid td.gap { background: #fff; }
.grid td.mark, .grid .blank td.mark { background: #f0f0f0; box-shadow: inset 1px 1px #fff; vertical-align: middle; }
.mark i { display: block; width: 0; margin-left: 4px; border: 4px solid transparent; border-left: 5px solid #000; border-right: 0; }
.grid td.r { text-align: right; padding-right: 3px; }
.grid td.name, .grid td.code { text-align: left; padding-left: 2px; }
.grid b { display: inline-block; width: 12px; line-height: 12px; font-family: "Liberation Serif", serif; font-size: 13px; text-align: center; }
.wide { display: inline-block; width: 12px; line-height: 12px; text-align: center; }
.grid .last td { height: 16px; border-bottom: 0; }
.tickcell input { display: block; box-sizing: border-box; width: 13px; height: 13px; margin-top: 1px; background: #fff; border: solid #fff; border-width: 2px; border-top-color: #777; border-left-color: #777; box-shadow: inset -1px -1px #e3e3e3; }
.grid .before td:not(.mark):not(.gap), .grid .current td:not(.mark):not(.gap), .grid .editing td:not(.mark) { border-bottom-color: #3399ff; }
.grid .current td:not(.mark):not(.gap) { background: #a6b0ca; }
.grid .editing td:not(.mark) { background: #b4d8ff; }
.labor { color: #800000; }
.material { color: #000080; }
.machine { color: #008000; }
.grid .editing { color: #000; }
.grid td.edit { padding: 0; }
.edit input { display: block; box-sizing: border-box; width: 100%; height: 17px; padding-left: 2px; background: #fff; border: 1px solid #3399ff; border-bottom-width: 2px; line-height: 14px; }
.hbar { flex: none; display: flex; height: 17px; margin-left: 2px; border-bottom: 1px solid #000; background: repeating-conic-gradient(#f0f0f0 0 25%, #fff 0 50%) 0 0 / 2px 2px; }
.hbar i { width: 6px; background: #000; }
.hbar button { box-sizing: border-box; width: 17px; background: #f0f0f0; border: 1px solid #fff; border-right-color: #777; border-bottom-color: #777; display: flex; align-items: center; justify-content: center; }
.hbar button::before { content: ""; border: 4px solid transparent; border-right: 5px solid #999; border-left: 0; }
.detail { flex: 1; min-height: 0; display: flex; overflow: hidden; margin: 3px 0 0 2px; align-items: stretch; }
.detail-tools { flex: none; width: 26px; padding: 1px 0 0 4px; box-sizing: border-box; }
.detail-tools .tool { width: 20px; }
.details { flex: 1; min-width: 0; align-self: flex-start; }
.w8 { width: 8px; } .w10 { width: 10px; } .w21 { width: 21px; } .w27 { width: 27px; } .w29 { width: 29px; } .w31 { width: 31px; }
.w41 { width: 41px; } .w51 { width: 51px; } .w54 { width: 54px; } .w71 { width: 71px; } .w79 { width: 79px; } .w81 { width: 81px; }
.w86 { width: 86px; } .w91 { width: 91px; } .w111 { width: 111px; } .w275 { width: 275px; } .w336 { width: 336px; }
.callout { position: absolute; left: 505px; top: 458px; width: 979px; height: 369px; border: 7px solid #fc3838; pointer-events: none; }
</style>
